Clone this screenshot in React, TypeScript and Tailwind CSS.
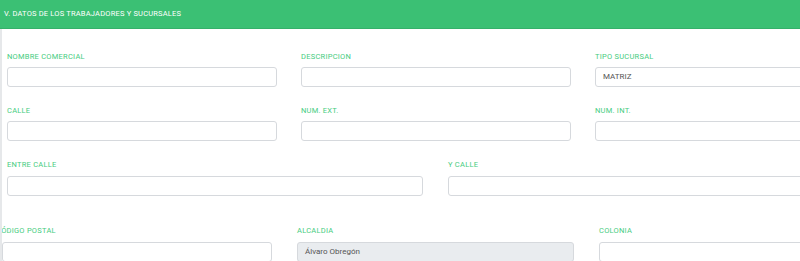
import React from "react";

const font = { fontFamily: "Roboto, 'Liberation Sans', sans-serif" };

function Label({ children, className = "" }: { children: React.ReactNode; className?: string }) {
  return (
    <div className={"h-[10px] leading-[10px] text-[7.5px] uppercase text-[#45cc7e] tracking-[0.25px] whitespace-nowrap " + className}>
      {children}
    </div>
  );
}

function Input({ value = "", disabled = false, className = "" }: { value?: string; disabled?: boolean; className?: string }) {
  return (
    <div
      className={
        "h-[20px] border border-[#d6d9dd] rounded-[3px] flex items-center px-[7px] text-[8px] text-[#555] whitespace-nowrap " +
        (disabled ? "bg-[#e9ecef] " : "bg-white ") +
        className
      }
    >
      {value}
    </div>
  );
}

export default function App() {
  return (
    <div className="w-[800px] h-[261px] overflow-hidden bg-white" style={font}>
      <div className="h-[29px] bg-[#3bc074] border-b border-[#35b06a] flex items-center pl-[4px] text-white text-[7.5px] tracking-[0.2px] whitespace-nowrap">
        V. DATOS DE LOS TRABAJADORES Y SUCURSALES
      </div>
      <div className="border-l-2 border-[#e6e8ea] h-[232px]">
        <div className="pl-[5px] pt-[23px]">
          <div className="flex gap-x-[24px]">
            <div className="w-[270px] shrink-0">
              <Label>Nombre comercial</Label>
              <Input className="mt-[5px]" />
            </div>
            <div className="w-[270px] shrink-0">
              <Label>Descripcion</Label>
              <Input className="mt-[5px]" />
            </div>
            <div className="w-[270px] shrink-0">
              <Label>Tipo sucursal</Label>
              <Input className="mt-[5px]" value="MATRIZ" />
            </div>
          </div>
          <div className="flex gap-x-[24px] mt-[19px]">
            <div className="w-[270px] shrink-0">
              <Label>Calle</Label>
              <Input className="mt-[5px]" />
            </div>
            <div className="w-[270px] shrink-0">
              <Label>Num. Ext.</Label>
              <Input className="mt-[5px]" />
            </div>
            <div className="w-[270px] shrink-0">
              <Label>Num. Int.</Label>
              <Input className="mt-[5px]" />
            </div>
          </div>
          <div className="flex gap-x-[25px] mt-[19px]">
            <div className="w-[416px] shrink-0">
              <Label>Entre calle</Label>
              <Input className="mt-[6px]" />
            </div>
            <div className="w-[416px] shrink-0">
              <Label>Y calle</Label>
              <Input className="mt-[6px]" />
            </div>
          </div>
        </div>
        <div className="flex gap-x-[25px] mt-[30px]">
          <div className="w-[270px] shrink-0 overflow-hidden">
            <Label className="ml-[-6px]">Código postal</Label>
            <Input className="mt-[6px]" />
          </div>
          <div className="w-[277px] shrink-0">
            <Label>Alcaldia</Label>
            <Input className="mt-[6px]" value="Álvaro Obregón" disabled />
          </div>
          <div className="w-[270px] shrink-0">
            <Label>Colonia</Label>
            <Input className="mt-[6px]" />
          </div>
        </div>
      </div>
    </div>
  );
}
